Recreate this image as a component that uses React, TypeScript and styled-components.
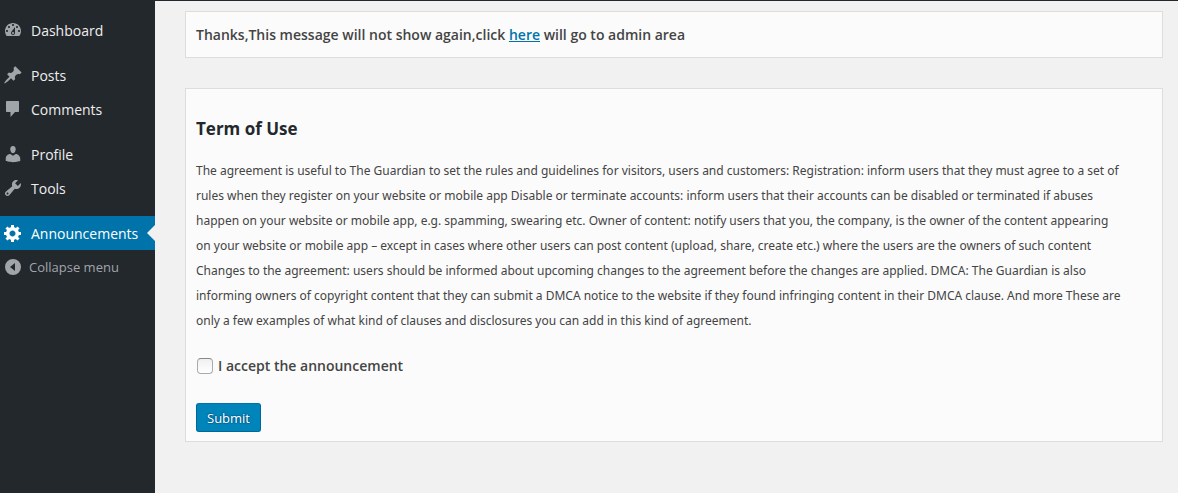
import React, { Fragment } from 'react';
import styled, { createGlobalStyle, css } from 'styled-components';

const GlobalStyle = createGlobalStyle`
  *, *::before, *::after { box-sizing: border-box; }
  body {
    margin: 0;
    background: #f1f1f1;
    color: #444;
    font-family: "Open Sans", "Noto Sans", sans-serif;
    font-size: 14px;
  }
`;

const Page = styled.div`
  display: flex;
  min-height: 100vh;
  border-top: 1px solid #23282d;
`;

const Sidebar = styled.nav`
  flex: 0 0 155px;
  padding-top: 12px;
  background: #23282d;
`;

const MenuGroup = styled.ul`
  margin: 0 0 11px;
  padding: 0;
  list-style: none;

  &:last-child { margin-bottom: 0; }
`;

const itemStyle = css`
  display: flex;
  align-items: center;
  width: 100%;
  height: 34px;
  padding: 0 0 0 3px;
  border: 0;
  font-family: inherit;
  text-decoration: none;
  white-space: nowrap;
`;

const MenuLink = styled.a<{ $current?: boolean }>`
  ${itemStyle}
  position: relative;
  gap: 8px;
  background: ${(p) => (p.$current ? '#0073aa' : 'transparent')};
  color: ${(p) => (p.$current ? '#fff' : '#eee')};
  font-size: 14px;

  svg { color: ${(p) => (p.$current ? '#fff' : '#a0a5aa')}; }

  ${(p) => p.$current && css`
    &::after {
      content: "";
      position: absolute;
      top: 9px;
      right: 0;
      border: 8px solid transparent;
      border-left: 0;
      border-right-color: #f1f1f1;
    }
  `}
`;

const CollapseButton = styled.button`
  ${itemStyle}
  gap: 6px;
  background: transparent;
  color: #a0a5aa;
  font-size: 13px;
  cursor: pointer;
`;

const Icon = styled.svg`
  flex: none;
  width: 20px;
  height: 20px;
  fill: currentColor;
`;

const Content = styled.main`
  flex: 1;
  min-width: 0;
  display: flex;
  flex-direction: column;
  gap: 30px;
  padding: 10px 15px 50px 30px;
`;

const Panel = styled.section`
  padding: 0 10px;
  border: 1px solid #ddd;
  background: #fbfbfb;
`;

const Message = styled.p`
  margin: 0;
  padding: 10px 0;
  font-weight: 600;
  line-height: 25px;
`;

const Link = styled.a`
  color: #0073aa;
`;

const Title = styled.h2`
  margin: 27px 0 16px;
  color: #23282d;
  font-size: 17px;
  font-weight: 700;
  line-height: 26px;
`;

const Terms = styled.p`
  margin: 0;
  font-family: "Noto Sans", "Open Sans", sans-serif;
  font-size: 12px;
  line-height: 25px;
`;

const Accept = styled.label`
  display: flex;
  align-items: center;
  gap: 5px;
  margin: 20px 0 25px;
  font-weight: 600;
  line-height: 25px;
`;

const Checkbox = styled.input`
  appearance: none;
  width: 16px;
  height: 16px;
  margin: 0 0 0 1px;
  border: 1px solid #aaa;
  border-top-color: #888;
  border-radius: 4px;
  background: linear-gradient(#f0f0f0, #fff);
`;

const SubmitButton = styled.button`
  display: block;
  height: 29px;
  margin-bottom: 9px;
  padding: 0 10px;
  border: 1px solid #006799;
  border-color: #0073aa #006799 #006799;
  border-radius: 3px;
  background: #0085ba;
  color: #fff;
  font-family: inherit;
  font-size: 13px;
  line-height: 26px;
  text-shadow: 0 -1px 1px #006799, 1px 0 1px #006799, 0 1px 1px #006799, -1px 0 1px #006799;
  cursor: pointer;
`;

const paths = {
  dashboard:
    'M3.76 16h12.48c1.1-1.37 1.76-3.11 1.76-5 0-4.42-3.58-8-8-8s-8 3.58-8 8c0 1.89.66 3.63 1.76 5zM10 4c.55 0 1 .45 1 1s-.45 1-1 1-1-.45-1-1 .45-1 1-1zM6 6c.55 0 1 .45 1 1s-.45 1-1 1-1-.45-1-1 .45-1 1-1zm8 0c.55 0 1 .45 1 1s-.45 1-1 1-1-.45-1-1 .45-1 1-1zm-5.37 5.55L12 7v6c0 1.1-.9 2-2 2s-2-.9-2-2c0-.57.24-1.08.63-1.45zM4 10c.55 0 1 .45 1 1s-.45 1-1 1-1-.45-1-1 .45-1 1-1zm12 0c.55 0 1 .45 1 1s-.45 1-1 1-1-.45-1-1 .45-1 1-1zm-5 3c0-.55-.45-1-1-1s-1 .45-1 1 .45 1 1 1 1-.45 1-1z',
  pin: 'M10.44 3.02l1.82-1.82 6.36 6.35-1.83 1.82c-1.05-.68-2.48-.57-3.41.36l-.75.75c-.92.93-1.04 2.35-.35 3.41l-1.83 1.82-2.41-2.41-2.8 2.79c-.42.42-3.38 2.71-3.8 2.29s1.86-3.39 2.28-3.81l2.79-2.79L4.1 9.36l1.83-1.82c1.05.69 2.48.57 3.4-.36l.75-.75c.93-.92 1.05-2.35.36-3.41z',
  comment:
    'M4 2h11c.55 0 1 .45 1 1v9c0 .55-.45 1-1 1h-3l-4.5 5v-5H4c-.55 0-1-.45-1-1V3c0-.55.45-1 1-1z',
  user: 'M10 9.25c-2.27 0-2.73-3.44-2.73-3.44C7 4.02 7.82 2 9.97 2c2.16 0 2.98 2.02 2.71 3.81 0 0-.41 3.44-2.68 3.44zM12.72 10c2.39 0 4.52 2.33 4.52 4.53v2.49s-3.65 1.13-7.24 1.13c-3.65 0-7.24-1.13-7.24-1.13v-2.49c0-2.25 1.94-4.53 4.52-4.53L10 11.82z',
  wrench:
    'M16.68 9.77c-1.34 1.34-3.3 1.67-4.95.99l-5.41 6.52c-.99.99-2.59.99-3.58 0s-.99-2.59 0-3.57l6.52-5.42c-.68-1.65-.35-3.61.99-4.95 1.28-1.28 3.12-1.62 4.72-1.06l-2.89 2.89 2.82 2.82 2.86-2.87c.53 1.58.18 3.39-1.08 4.65zM3.81 16.21c.4.39 1.04.39 1.43 0 .4-.4.4-1.04 0-1.43-.39-.4-1.03-.4-1.43 0-.39.39-.39 1.03 0 1.43z',
  gear: 'M18 12h-2.18c-.17.7-.44 1.35-.81 1.93l1.54 1.54-2.1 2.1-1.54-1.54c-.58.36-1.23.63-1.91.79V19H8v-2.18c-.68-.16-1.33-.43-1.91-.79l-1.54 1.54-2.12-2.12 1.54-1.54c-.36-.58-.63-1.23-.79-1.91H1V9.03h2.17c.16-.7.44-1.35.8-1.94L2.43 5.55l2.1-2.1 1.54 1.54c.58-.37 1.24-.64 1.93-.81V2h3v2.18c.68.16 1.33.43 1.91.79l1.54-1.54 2.12 2.12-1.54 1.54c.36.59.64 1.24.8 1.94H18V12zm-8.5 1.5c1.66 0 3-1.34 3-3s-1.34-3-3-3-3 1.34-3 3 1.34 3 3 3z',
  collapse:
    'M10 2a8 8 0 1 0 0 16 8 8 0 0 0 0-16zM12 6v8L7 10z',
};

type IconName = keyof typeof paths;

const Glyph = ({ name }: { name: IconName }) => (
  <Icon viewBox="0 0 20 20" aria-hidden="true">
    <path fillRule="evenodd" d={paths[name]} />
  </Icon>
);

const groups: { label: string; icon: IconName; current?: boolean }[][] = [
  [{ label: 'Dashboard', icon: 'dashboard' }],
  [
    { label: 'Posts', icon: 'pin' },
    { label: 'Comments', icon: 'comment' },
  ],
  [
    { label: 'Profile', icon: 'user' },
    { label: 'Tools', icon: 'wrench' },
  ],
  [{ label: 'Announcements', icon: 'gear', current: true }],
];

const terms = [
  'The agreement is useful to The Guardian to set the rules and guidelines for visitors, users and customers: Registration: inform users that they must agree to a set of',
  'rules when they register on your website or mobile app Disable or terminate accounts: inform users that their accounts can be disabled or terminated if abuses',
  'happen on your website or mobile app, e.g. spamming, swearing etc. Owner of content: notify users that you, the company, is the owner of the content appearing',
  'on your website or mobile app – except in cases where other users can post content (upload, share, create etc.) where the users are the owners of such content',
  'Changes to the agreement: users should be informed about upcoming changes to the agreement before the changes are applied. DMCA: The Guardian is also',
  'informing owners of copyright content that they can submit a DMCA notice to the website if they found infringing content in their DMCA clause. And more These are',
  'only a few examples of what kind of clauses and disclosures you can add in this kind of agreement.',
];

export default function App() {
  return (
    <>
      <GlobalStyle />
      <Page>
        <Sidebar aria-label="Main menu">
          {groups.map((group, i) => (
            <MenuGroup key={group[0].label}>
              {group.map((item) => (
                <li key={item.label}>
                  <MenuLink
                    href="#"
                    $current={item.current}
                    aria-current={item.current ? 'page' : undefined}
                  >
                    <Glyph name={item.icon} />
                    {item.label}
                  </MenuLink>
                </li>
              ))}
              {i === groups.length - 1 && (
                <li>
                  <CollapseButton type="button">
                    <Glyph name="collapse" />
                    Collapse menu
                  </CollapseButton>
                </li>
              )}
            </MenuGroup>
          ))}
        </Sidebar>
        <Content>
          <Panel>
            <Message>
              Thanks,This message will not show again,click <Link href="#">here</Link> will go to
              admin area
            </Message>
          </Panel>
          <Panel as="form" onSubmit={(e: React.FormEvent) => e.preventDefault()}>
            <Title>Term of Use</Title>
            <Terms>
              {terms.map((line, i) => (
                <Fragment key={line}>
                  {i > 0 && <br />}
                  {line}
                </Fragment>
              ))}
            </Terms>
            <Accept>
              <Checkbox type="checkbox" />
              I accept the announcement
            </Accept>
            <SubmitButton type="submit">Submit</SubmitButton>
          </Panel>
        </Content>
      </Page>
    </>
  );
}
